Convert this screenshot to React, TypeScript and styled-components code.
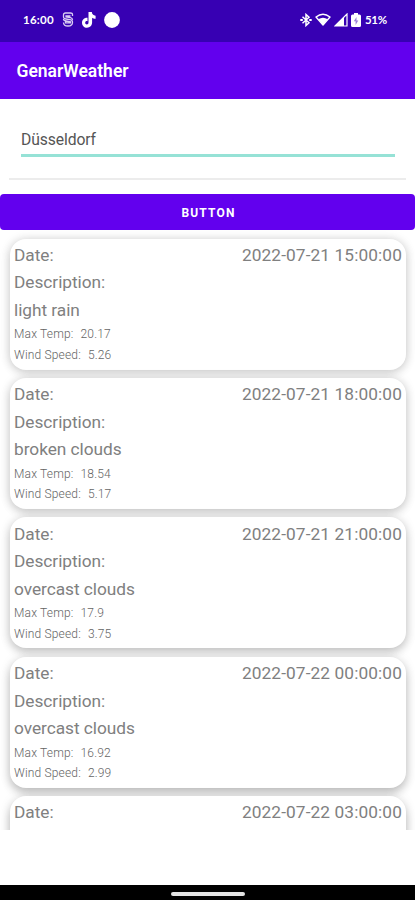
import React from 'react';
import styled, { createGlobalStyle } from 'styled-components';

const GlobalStyle = createGlobalStyle`
  * { box-sizing: border-box; }
  body { margin: 0; background: #fff; font-family: Roboto, "Liberation Sans", sans-serif; }
`;

const Screen = styled.main`
  display: flex;
  flex-direction: column;
  width: 415px;
  height: 900px;
  overflow: hidden;
  background: #fff;
`;

const StatusBar = styled.header`
  flex: none;
  height: 42px;
  padding: 0 28px 3px 23px;
  display: flex;
  align-items: center;
  justify-content: space-between;
  background: #3700b3;
  color: #fff;
`;

const StatusGroup = styled.div<{ $gap: number }>`
  display: flex;
  align-items: center;
  gap: ${({ $gap }) => $gap}px;
  svg { display: block; }
`;

const Clock = styled.span`
  width: 31px;
  font: 700 11.5px/16px Lato, Roboto, sans-serif;
  letter-spacing: 0.25px;
  white-space: nowrap;
`;

const Percent = styled.span`
  width: 22px;
  margin-left: 1px;
  font: 700 11.5px/16px Lato, Roboto, sans-serif;
  letter-spacing: -0.3px;
  white-space: nowrap;
`;

const AppBar = styled.div`
  flex: none;
  height: 57px;
  padding: 0 17px 0 16.5px;
  display: flex;
  align-items: center;
  background: #6200ee;
`;

const Title = styled.h1`
  margin: 0;
  font-size: 17.5px;
  line-height: 24px;
  font-weight: 600;
  letter-spacing: 0;
  color: #fff;
`;

const SearchArea = styled.section`
  flex: none;
  height: 81px;
  margin: 0 9px;
  padding: 30px 11px 0 12px;
  border-bottom: 2px solid #ececec;
`;

const CityInput = styled.input`
  display: block;
  width: 100%;
  height: 28px;
  padding: 0 0 4px;
  border: 0;
  border-bottom: 3px solid #96e2d6;
  border-radius: 0;
  outline: 0;
  background: transparent;
  color: #555;
  font: 400 15.7px/18px Roboto, sans-serif;
  letter-spacing: -0.1px;
`;

const SubmitButton = styled.button`
  flex: none;
  height: 36px;
  margin: 14px 0 0;
  padding: 2px 0 0 2px;
  border: 0;
  border-radius: 4px;
  background: #6200ee;
  color: #fff;
  font: 700 12px/16px Roboto, sans-serif;
  letter-spacing: 1.15px;
`;

const ForecastList = styled.section`
  flex: none;
  height: 600px;
  padding: 8.5px 9px 0 10px;
  display: flex;
  flex-direction: column;
  gap: 8.2px;
  overflow: hidden;
`;

const Card = styled.article<{ $depth: number }>`
  flex: none;
  height: 131.2px;
  padding: 3.4px 4px 0;
  border-radius: 16px;
  background: #fff;
  color: #808080;
  box-shadow: 0 ${({ $depth }) => 2 + $depth}px 10px rgba(0, 0, 0, ${({ $depth }) => 0.14 + $depth * 0.02}),
    0 1px 12px rgba(0, 0, 0, 0.12);
`;

const Line = styled.div`
  display: flex;
  justify-content: space-between;
  height: 27.5px;
  font-size: 17.3px;
  font-weight: 400;
  line-height: 27.5px;
  letter-spacing: -0.04px;
  white-space: pre;
`;

const DateValue = styled.time`
  letter-spacing: 0.1px;
`;

const Metric = styled.div`
  display: flex;
  gap: 7px;
  height: 20.5px;
  color: #646464;
  font-size: 12px;
  font-weight: 300;
  line-height: 20.4px;
  letter-spacing: 0.17px;
`;

const Blank = styled.div`
  flex: 1;
`;

const NavBar = styled.footer`
  flex: none;
  height: 15.5px;
  display: flex;
  justify-content: center;
  padding-top: 7px;
  background: #000;
`;

const HomeHandle = styled.div`
  width: 74px;
  height: 4px;
  border-radius: 2px;
  background: #e4e4e4;
`;

const forecasts = [
  { date: '2022-07-21 15:00:00', description: 'light rain', temp: '20.17', wind: '5.26' },
  { date: '2022-07-21 18:00:00', description: 'broken clouds', temp: '18.54', wind: '5.17' },
  { date: '2022-07-21 21:00:00', description: 'overcast clouds', temp: '17.9', wind: '3.75' },
  { date: '2022-07-22 00:00:00', description: 'overcast clouds', temp: '16.92', wind: '2.99' },
  { date: '2022-07-22 03:00:00', description: '', temp: '', wind: '' },
];

const ShieldIcon = () => (
  <svg width="12" height="15" viewBox="0 0 12 15" fill="none" stroke="#d9ccf3" strokeWidth="1.3">
    <path d="M10.5 4V2.5Q10.5 1 8.5 1h-5Q1.5 1 1.5 3v2Q1.5 6.7 4 7l4 .7q2.5.4 2.5 2.5Q10.5 14 6 14 1.5 14 1.5 10.5" />
    <path d="M8.5 4H4v1l4.5.7q2 .5 2 2.3M3.5 9.5v1.3h5v-1L4 9Q1.5 8.5 1.5 7" />
  </svg>
);

const TikTokIcon = () => (
  <svg width="14" height="16" viewBox="0 0 14 16" fill="#fff">
    <path d="M6.500 0h3.300c.2 2.100 1.500 3.500 3.800 3.700v3c-1.500 0-2.600-.4-3.500-1v4.900c0 3-2.200 5.200-5.100 5.200S0 13.500 0 10.700c0-3 2.400-5.300 5.500-5v3.500c-1.300-.4-2.300.4-2.300 1.500 0 1 .7 1.700 1.600 1.700 1.100 0 1.700-.7 1.700-2z" />
  </svg>
);

const DotIcon = () => (
  <svg width="16" height="16" viewBox="0 0 16 16"><circle cx="8" cy="8" r="7.9" fill="#fff" /></svg>
);

const BluetoothIcon = () => (
  <svg width="12" height="14" viewBox="0 0 12 14" fill="none" stroke="#fff" strokeWidth="1.5">
    <path d="M2.500 3.800 9 9.800 6 12.500v-11L9 4.200 2.500 10.200" />
    <path d="M.3 7h2.500M9.200 7h2.500" strokeWidth="2" />
  </svg>
);

const WifiIcon = () => (
  <svg width="16" height="13" viewBox="0 0 16 13">
    <path d="M1 4q7-5.600 14 0L8 12z" fill="none" stroke="#fff" strokeWidth="1.400" strokeLinejoin="round" />
    <path d="M3.300 6.300q4.700-3 9.400 0L8 12z" fill="#fff" />
  </svg>
);

const SignalIcon = () => (
  <svg width="14" height="14" viewBox="0 0 14 14">
    <path d="M1 13 13 1v12z" fill="none" stroke="#fff" strokeWidth="1.200" />
    <path d="M1 13 10 4v9z" fill="#fff" />
  </svg>
);

const BatteryIcon = () => (
  <svg width="10" height="14" viewBox="0 0 10 14">
    <path d="M3 0h4v1.500h1.500Q10 1.500 10 3v9.500Q10 14 8.500 14h-7Q0 14 0 12.500V3q0-1.500 1.500-1.500H3z" fill="#fff" />
    <path d="M5.500 4 2.800 8.300h1.800V12l2.700-4.600H5.500z" fill="#3700b3" opacity=".5" />
  </svg>
);

export default function App() {
  return (
    <>
      <GlobalStyle />
      <Screen>
        <StatusBar>
          <StatusGroup $gap={8}>
            <Clock>16:00</Clock>
            <ShieldIcon />
            <TikTokIcon />
            <DotIcon />
          </StatusGroup>
          <StatusGroup $gap={3}>
            <BluetoothIcon />
            <WifiIcon />
            <SignalIcon />
            <BatteryIcon />
            <Percent>51%</Percent>
          </StatusGroup>
        </StatusBar>
        <AppBar><Title>GenarWeather</Title></AppBar>
        <SearchArea><CityInput aria-label="City" defaultValue="Düsseldorf" /></SearchArea>
        <SubmitButton>BUTTON</SubmitButton>
        <ForecastList>
          {forecasts.map((item, index) => (
            <Card key={item.date} $depth={index}>
              <Line><span>Date:</span><DateValue>{item.date}</DateValue></Line>
              {item.description && (
                <>
                  <Line>Description:</Line>
                  <Line>{item.description}</Line>
                  <Metric><span>Max Temp:</span><span>{item.temp}</span></Metric>
                  <Metric><span>Wind Speed:</span><span>{item.wind}</span></Metric>
                </>
              )}
            </Card>
          ))}
        </ForecastList>
        <Blank />
        <NavBar><HomeHandle /></NavBar>
      </Screen>
    </>
  );
}
